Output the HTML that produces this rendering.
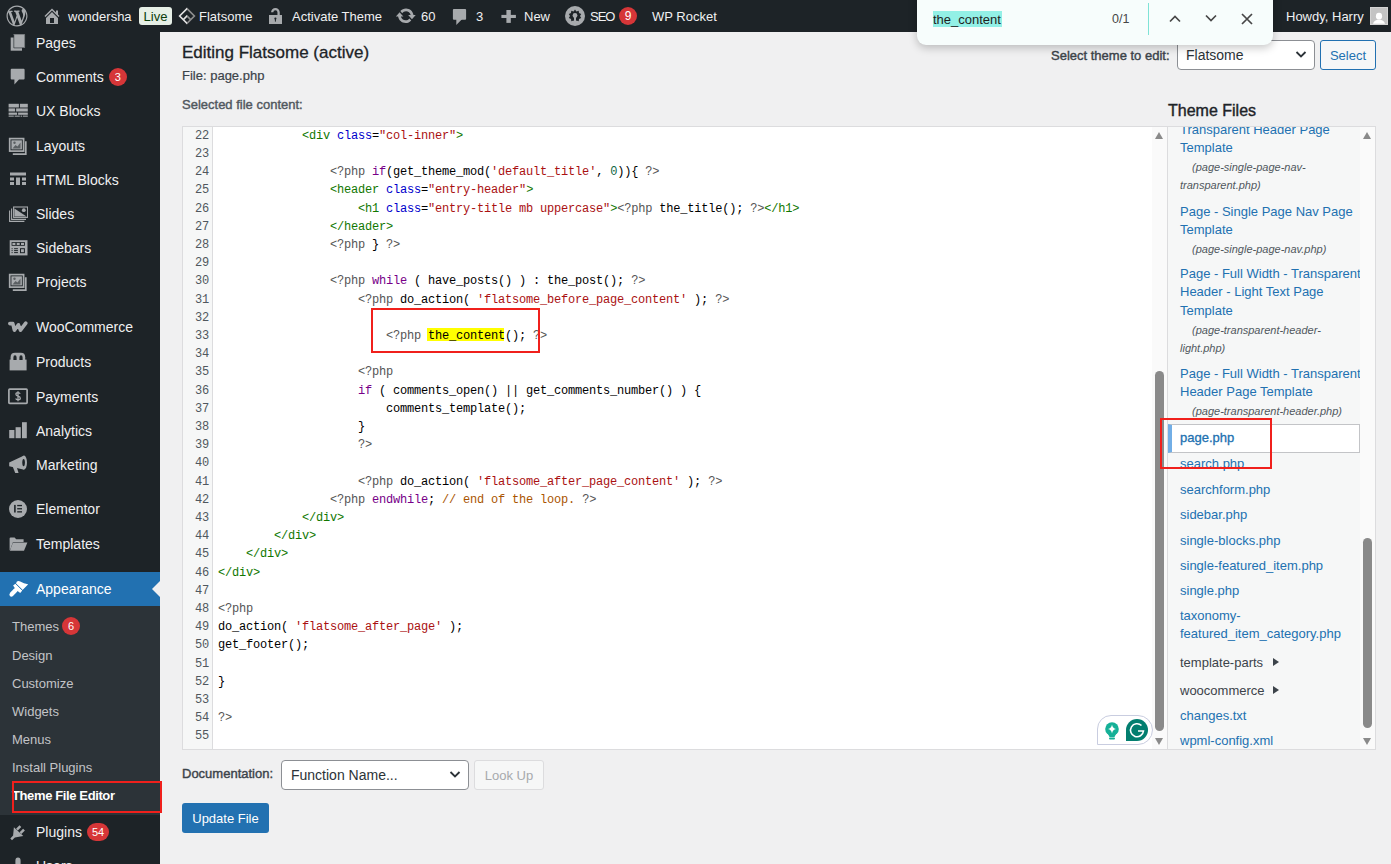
<!DOCTYPE html>
<html><head><meta charset="utf-8">
<style>
*{margin:0;padding:0;box-sizing:border-box}
html,body{width:1391px;height:864px;overflow:hidden;background:#f0f0f1;font-family:"Liberation Sans",sans-serif;color:#3c434a;font-size:13px}
.a{position:absolute;white-space:nowrap}
#bar{position:absolute;left:0;top:0;width:1391px;height:32px;background:#1d2327;color:#f0f0f1;font-size:13px}
#bar .t{position:absolute;top:0;line-height:32px;white-space:nowrap}
#side{position:absolute;left:0;top:32px;width:160px;height:832px;background:#1d2327}
.mi{position:absolute;left:0;width:160px;height:34px;color:#f0f0f1;font-size:14px}
.mi .lb{position:absolute;left:36px;top:0;line-height:34px;white-space:nowrap}
.mi svg{position:absolute;left:8px;top:7px}
.badge{display:inline-block;background:#d63638;color:#fff;border-radius:9px;height:18px;min-width:18px;padding:0 5px;font-size:11px;line-height:18px;text-align:center;vertical-align:top;margin-left:5px;margin-top:8px}
#sub{position:absolute;left:0;top:606px;width:160px;height:209px;background:#2c3338}
.si{position:absolute;left:12px;font-size:13px;color:#c3c4c7;white-space:nowrap;line-height:20px}
.semi{-webkit-text-stroke:0.4px currentColor}
#ed{position:absolute;left:182px;top:126px;width:986px;height:624px;background:#fff;border:1px solid #dcdcde;overflow:hidden}
#gut{position:absolute;left:0;top:0;width:30px;height:100%;background:#f6f7f7;border-right:1px solid #dcdcde}
.ln{position:absolute;left:0;width:26px;text-align:right;font-family:"Liberation Mono",monospace;font-size:12px;letter-spacing:-0.2px;color:#50575e;height:18.2px;line-height:18.2px}
.cl{position:absolute;left:35px;font-family:"Liberation Mono",monospace;font-size:12px;letter-spacing:-0.2px;color:#000;height:18.2px;line-height:18.2px;white-space:pre}
.hl{}
.tg{color:#117700}.at{color:#0000cc}.st{color:#aa1111}.kw{color:#770088}.cm{color:#aa5500}.mt{color:#555}.nm{color:#116644}
#tf{position:absolute;left:1167px;top:126px;width:209px;height:624px;background:#f6f7f7;border:1px solid #dcdcde;overflow:hidden}
.lk{position:absolute;left:12px;color:#2271b1;font-size:13px;line-height:18.2px;white-space:nowrap}
.fn{position:absolute;left:24px;color:#50575e;font-size:11px;font-style:italic;line-height:18px;white-space:nowrap}
.redbox{position:absolute;border:2px solid #f0201c}
</style></head><body>

<!-- ADMIN BAR -->
<div id="bar">
<svg class="a" style="left:6px;top:5px" width="22" height="22" viewBox="-0.5 -0.5 21 21"><path fill="#a7aaad" d="M20 10c0-5.51-4.49-10-10-10C4.48 0 0 4.49 0 10c0 5.52 4.48 10 10 10 5.51 0 10-4.48 10-10zM7.78 15.37L4.37 6.22c.55-.02 1.17-.08 1.17-.08.5-.06.44-1.13-.06-1.11 0 0-1.45.11-2.370.11-.18 0-.37 0-.58-.01C4.12 2.690 6.87 1.110 10 1.110c2.330 0 4.450.87 6.050 2.340-.68-.11-1.650.39-1.650 1.580 0 .74.45 1.360.9 2.100.35.61.55 1.360.55 2.460 0 1.490-1.400 5-1.400 5l-3.030-8.370c.54-.02.82-.17.82-.17.5-.05.44-1.250-.06-1.220 0 0-1.440.12-2.380.12-.87 0-2.330-.12-2.330-.12-.5-.03-.56 1.200-.06 1.220l.92.08 1.260 3.410zM17.410 10c.24-.64.74-1.870.43-4.250.7 1.290 1.050 2.710 1.050 4.250 0 3.290-1.730 6.240-4.400 7.780.97-2.590 1.940-5.200 2.920-7.780zM6.100 18.090C3.120 16.650 1.110 13.530 1.110 10c0-1.300.23-2.480.72-3.590C3.250 10.300 4.670 14.200 6.100 18.090zm4.030-6.630l2.580 6.980c-.86.29-1.760.45-2.710.45-.79 0-1.570-.11-2.290-.33.81-2.380 1.620-4.740 2.420-7.100z"/></svg>
<svg class="a" style="left:42px;top:6px" width="20" height="20" viewBox="0 0 20 20"><path fill="#a7aaad" d="M16 8.5l1.53 1.53-1.06 1.06L10 4.62l-6.47 6.47-1.06-1.06L10 2.5l4 4v-2h2v4zm-6-2.46l6 5.990V18H4v-5.970zM12 17v-5H8v5h4z"/></svg>
<div class="t" style="left:68px;top:1px">wondersha</div>
<div class="a" style="left:139px;top:7px;width:33px;height:18px;background:#e6efe6;border-radius:3px;color:#0b3d0b;font-size:13px;line-height:19.5px;text-align:center">Live</div>
<svg class="a" style="left:178px;top:7px" width="18" height="18" viewBox="-0.5 -0.5 19 19"><defs><linearGradient id="fg" x1="0" y1="0" x2="1" y2="0"><stop offset="0.5" stop-color="#e2e2e2"/><stop offset="0.5" stop-color="#8e8e8e"/></linearGradient></defs><g fill="none" stroke="url(#fg)" stroke-width="1.7"><path d="M9 1.2 L16.8 9 L9 16.8 L1.2 9 Z"/><path d="M5.4 12.6 L9 9 L12.6 12.6"/></g></svg>
<div class="t" style="left:199px;top:1px">Flatsome</div>
<svg class="a" style="left:268px;top:7px" width="15" height="18" viewBox="0 0 15 18"><path d="M4.2 5.3 A3.2 3.2 0 0 1 10.6 5.3 V8.5" fill="none" stroke="#a7aaad" stroke-width="2.3"/><rect x="1" y="8" width="13" height="9" fill="#a7aaad"/><circle cx="7.4" cy="11.6" r="1.1" fill="#1d2327"/><rect x="6.9" y="11.6" width="1" height="3" fill="#1d2327"/></svg>
<div class="t" style="left:292px;top:1px">Activate Theme</div>
<svg class="a" style="left:394.5px;top:5.2px" width="21.6" height="21.6" viewBox="0 0 20 20"><path fill="#a7aaad" d="M10.2 3.28c3.53 0 6.43 2.61 6.92 6h2.08l-3.5 4-3.5-4h2.320c-.45-1.970-2.210-3.450-4.320-3.450-1.450 0-2.730.71-3.540 1.780L4.950 5.660C6.230 4.200 8.110 3.280 10.200 3.280zm-.4 13.440c-3.520 0-6.430-2.610-6.920-6H.8l3.5-4c1.170 1.330 2.330 2.670 3.500 4H5.480c.45 1.970 2.210 3.450 4.320 3.450 1.450 0 2.730-.71 3.540-1.780l1.710 1.950c-1.280 1.460-3.150 2.380-5.250 2.380z"/></svg>
<div class="t" style="left:421px;top:1px">60</div>
<svg class="a" style="left:452px;top:9px" width="15" height="17" viewBox="0 0 15 17"><rect x="0.9" y="0" width="13.2" height="10.8" rx="1" fill="#a7aaad"/><path d="M4.3 10 V16 L10.2 10 Z" fill="#a7aaad"/></svg>
<div class="t" style="left:476px;top:1px">3</div>
<svg class="a" style="left:501px;top:9px" width="15" height="15" viewBox="0 0 15 15"><rect x="5.4" y="1" width="4.4" height="12.9" fill="#a7aaad"/><rect x="0.4" y="5.9" width="14.5" height="3.1" fill="#a7aaad"/></svg>
<div class="t" style="left:524px;top:1px">New</div>
<svg class="a" style="left:564px;top:5px" width="22" height="22" viewBox="0 0 22 22"><circle cx="11" cy="11" r="10" fill="#a7aaad"/><path d="M11 4.5 L12.4 6.4 L14.7 5.7 L15 8 L17.2 9 L16 11 L17.2 13 L15 14 L14.7 16.3 L12.4 15.6 L11 17.5 L9.6 15.6 L7.3 16.3 L7 14 L4.8 13 L6 11 L4.8 9 L7 8 L7.3 5.7 L9.6 6.4 Z" fill="#1d2327"/><circle cx="11" cy="10.5" r="2.4" fill="#a7aaad"/><rect x="10" y="10.5" width="2" height="8" fill="#a7aaad"/></svg>
<div class="t" style="left:590px;top:1px;letter-spacing:-1px">SEO</div>
<div class="a" style="left:619px;top:7px;width:18px;height:18px;border-radius:9px;background:#d63638;color:#fff;font-size:12px;line-height:18px;text-align:center">9</div>
<div class="t" style="left:652px;top:1px">WP Rocket</div>
<div class="t" style="left:1286px;top:1px">Howdy, Harry</div>
<svg class="a" style="left:1370px;top:7px" width="18" height="18" viewBox="0 0 18 18"><rect x="0.5" y="0.5" width="17" height="17" fill="#c4c4c4" stroke="#d4d4d4" stroke-width="1"/><ellipse cx="9" cy="9.2" rx="3.1" ry="3.4" fill="#fff"/><path d="M3 16.7 Q4 12.8 9 12.8 Q14 12.8 15 16.7 Z" fill="#fff"/></svg>
</div>

<!-- SIDEBAR -->
<div id="side">
<!--SIDE-->
<div class="mi" style="top:-5.6px"><svg width="20" height="20" viewBox="0 0 20 20"><path d="M2.7 4.5h11.3v13.2H2.7z" fill="#a7aaad"/><path d="M5.8 1.5h10.8v13.4H5.8z" fill="#a7aaad" stroke="#1d2327" stroke-width="0.6"/><path d="M5.5 1.5h11.1v13.4" fill="none" stroke="#a7aaad" stroke-width="0.6"/></svg><div class="lb">Pages</div></div>
<div class="mi" style="top:28.4px"><svg width="20" height="20" viewBox="0 0 20 20"><path d="M3.7 1.8h11.9q1 0 1 1v8.8q0 1-1 1H11L6.4 17.6v-5H3.7q-1 0-1-1V2.8q0-1 1-1z" fill="#a7aaad"/></svg><div class="lb">Comments<span class="badge">3</span></div></div>
<div class="mi" style="top:62.4px"><svg width="20" height="20" viewBox="0 0 20 20"><g fill="#a7aaad"><rect x="0.6" y="2.8" width="10.3" height="3.7"/><rect x="11.9" y="2.8" width="7.9" height="3.7"/><rect x="0.6" y="7.4" width="6.5" height="3.1"/><rect x="8.1" y="7.4" width="11.7" height="3.1"/><rect x="0.6" y="11.6" width="8.5" height="2.2"/><rect x="10.1" y="11.6" width="9.7" height="2.2"/><rect x="0.6" y="14.6" width="5.2" height="1.1"/><rect x="6.6" y="14.6" width="5.2" height="1.1"/><rect x="12.6" y="14.6" width="1.4" height="1.1"/><rect x="14.8" y="14.6" width="5" height="1.1"/></g></svg><div class="lb">UX Blocks</div></div>
<div class="mi" style="top:96.6px"><svg width="20" height="20" viewBox="0 0 20 20"><path d="M17.8 5.2v13H4.8" fill="none" stroke="#a7aaad" stroke-width="1.7"/><rect x="1.7" y="2.6" width="13.9" height="12.5" fill="none" stroke="#a7aaad" stroke-width="1.7"/><rect x="3.4" y="4.3" width="10.5" height="9.1" fill="#a7aaad"/><path d="M4.5 12.5l3-3.5 2 1.5 3-4v6z" fill="#1d2327" opacity="0.55"/><circle cx="6.5" cy="6.8" r="1.2" fill="#1d2327" opacity="0.55"/></svg><div class="lb">Layouts</div></div>
<div class="mi" style="top:130.8px"><svg width="20" height="20" viewBox="0 0 20 20"><g fill="#a7aaad"><rect x="2" y="2.5" width="16" height="3"/><rect x="2" y="7.5" width="4" height="3"/><rect x="8" y="7.5" width="4" height="7.5"/><rect x="14" y="7.5" width="4" height="3"/><rect x="2" y="12" width="4" height="3"/><rect x="14" y="12" width="4" height="3"/></g></svg><div class="lb">HTML Blocks</div></div>
<div class="mi" style="top:164.8px"><svg width="20" height="20" viewBox="0 0 20 20"><g fill="none" stroke="#a7aaad" stroke-width="1.1"><path d="M1.6 6.4V17.4H16.4"/><path d="M3.6 4.6V15.4H18"/><rect x="5.6" y="3" width="14" height="10.4" fill="#1d2327"/></g><path d="M6.4 4.6L18.6 12.6H6.4Z" fill="#a7aaad"/><circle cx="15.8" cy="6.2" r="1.9" fill="#a7aaad"/></svg><div class="lb">Slides</div></div>
<div class="mi" style="top:198.8px"><svg width="20" height="20" viewBox="0 0 20 20"><rect x="1.7" y="2.2" width="17.8" height="15.2" fill="#a7aaad"/><g fill="#1d2327"><rect x="3.6" y="4.1" width="13.3" height="3.7"/><rect x="3.6" y="10.2" width="1" height="1"/><rect x="3.6" y="12.1" width="1" height="1"/><rect x="3.6" y="14.1" width="1" height="1"/><rect x="6.1" y="10.2" width="3.8" height="1"/><rect x="6.1" y="12.1" width="3.8" height="1"/><rect x="6.1" y="14.1" width="3.8" height="1"/><rect x="12" y="10.2" width="4.9" height="5"/></g><g fill="#a7aaad"><rect x="4.4" y="4.9" width="3" height="2.1"/><rect x="8.7" y="4.9" width="3" height="2.1"/><rect x="13" y="4.9" width="3" height="2.1"/><rect x="13" y="11.2" width="2.9" height="3"/></g></svg><div class="lb">Sidebars</div></div>
<div class="mi" style="top:232.8px"><svg width="20" height="20" viewBox="0 0 20 20"><path d="M17.8 5.2v13H4.8" fill="none" stroke="#a7aaad" stroke-width="1.7"/><rect x="1.7" y="2.6" width="13.9" height="12.5" fill="none" stroke="#a7aaad" stroke-width="1.7"/><rect x="3.4" y="4.3" width="10.5" height="9.1" fill="#a7aaad"/><path d="M4.5 12.5l3-3.5 2 1.5 3-4v6z" fill="#1d2327" opacity="0.55"/><circle cx="6.5" cy="6.8" r="1.2" fill="#1d2327" opacity="0.55"/></svg><div class="lb">Projects</div></div>
<div class="mi" style="top:278.4px"><svg width="20" height="20" viewBox="0 0 20 20"><path d="M1.8 6.6H4.8L6.4 13.2L10.4 7.8L12.5 13.2L17.8 6.2" fill="none" stroke="#a7aaad" stroke-width="3.6" stroke-linejoin="round" stroke-linecap="round"/></svg><div class="lb">WooCommerce</div></div>
<div class="mi" style="top:313.4px"><svg width="20" height="20" viewBox="0 0 20 20"><rect x="1.6" y="7.6" width="17" height="10.8" fill="#a7aaad"/><path d="M2.6 8V5.2Q2.6 0.8 7 0.8H12.8Q17.2 0.8 17.2 5.2V8z" fill="#a7aaad"/><path d="M5.4 8V5.6Q5.4 3.2 7 3.2Q8.6 3.2 8.6 5.6V8zM11.4 8V5.6Q11.4 3.2 13 3.2Q14.6 3.2 14.6 5.6V8z" fill="#1d2327"/></svg><div class="lb">Products</div></div>
<div class="mi" style="top:347.8px"><svg width="20" height="20" viewBox="0 0 20 20"><rect x="0.9" y="2.2" width="18.2" height="14.2" rx="0.8" fill="none" stroke="#a7aaad" stroke-width="1.7"/><path d="M12.2 6.8Q11.6 5.6 10 5.6Q7.9 5.6 7.9 7.2Q7.9 8.6 10 9.2Q12.3 9.8 12.3 11.3Q12.3 12.9 10 12.9Q8.2 12.9 7.7 11.6M10 4.3V14.2" fill="none" stroke="#a7aaad" stroke-width="1.3"/></svg><div class="lb">Payments</div></div>
<div class="mi" style="top:381.8px"><svg width="20" height="20" viewBox="0 0 20 20"><g fill="#a7aaad"><rect x="1.2" y="9" width="5.2" height="8.2"/><rect x="7.6" y="6.2" width="5.2" height="11"/><rect x="14" y="1.2" width="4.8" height="16"/></g></svg><div class="lb">Analytics</div></div>
<div class="mi" style="top:415.8px"><svg width="20" height="20" viewBox="0 0 20 20"><path d="M1.2 7.6L15.5 0.8L16.2 14.8L1.2 11.2Z" fill="#a7aaad"/><path d="M4.6 11.2L8.8 12.2L10.6 17.9H7.2Z" fill="#a7aaad"/><ellipse cx="16" cy="7.6" rx="3" ry="7" fill="#a7aaad"/><ellipse cx="15.6" cy="7.6" rx="1.3" ry="3.6" fill="#1d2327"/></svg><div class="lb">Marketing</div></div>
<div class="mi" style="top:460.4px"><svg width="20" height="20" viewBox="0 0 20 20"><circle cx="10" cy="10" r="9" fill="#a7aaad"/><g fill="#1d2327"><rect x="6.1" y="5.9" width="1.6" height="7.6"/><rect x="9.2" y="5.9" width="4.8" height="1.3"/><rect x="9.2" y="9.1" width="4.8" height="1.3"/><rect x="9.2" y="12.2" width="4.8" height="1.3"/></g></svg><div class="lb">Elementor</div></div>
<div class="mi" style="top:494.9px"><svg width="20" height="20" viewBox="0 0 20 20"><path d="M1.6 4.6Q1.6 3.4 2.8 3.4H6.6L8.2 5.2H15.6V8H5L2 16.2H1.6Z" fill="#a7aaad"/><path d="M4.9 8.6H19.4L16 16.8H1.9Z" fill="#a7aaad"/></svg><div class="lb">Templates</div></div>
<div class="mi" style="top:783.0px"><svg width="20" height="20" viewBox="0 0 20 20"><path d="M5.9 5.2L15.3 14L6.9 15.4L4 18.2L2.3 16.5L5.1 13.6Z" fill="#a7aaad"/><path d="M8.9 7.6L12.4 4.1M12.5 11.2L16 7.7" stroke="#a7aaad" stroke-width="2.5"/></svg><div class="lb">Plugins<span class="badge">54</span></div></div>
<div class="mi" style="top:817.0px"><svg width="20" height="20" viewBox="0 0 20 20"><path d="M10 1.5q2.6 0 2.6 3.2v3q0 3-2.6 3t-2.6-3v-3q0-3.2 2.6-3.2z" fill="#a7aaad"/><path d="M3 18q0-5 4-6h6q4 1 4 6z" fill="#a7aaad"/></svg><div class="lb">Users</div></div>
<div class="mi" style="top:540px;background:#2271b1"><svg width="20" height="20" viewBox="0 0 20 20"><path d="M8 4.4 L8.9 2.5 Q10.6 1.7 12.2 2.6 Q16 5 20.3 5.3 L14.6 11 Z" fill="#fff"/><path d="M5.1 6.5 L7.4 4.8 L14.3 11.6 L12.2 13.9 L9.6 12 L8.6 12.9 L5.9 10.2 L6.8 9.1 Z" fill="#fff"/><path d="M6.2 9.6 L9.3 12.6 L5.2 16.8 Q3.4 18.5 1.9 17.1 Q0.6 15.6 2.3 13.6 Z" fill="#fff"/><path d="M7.6 4.6 L14.6 11.4" stroke="#2271b1" stroke-width="0.7"/></svg><div class="lb" style="color:#fff">Appearance</div><div class="a" style="left:152px;top:9px;width:0;height:0;border-top:8px solid transparent;border-bottom:8px solid transparent;border-right:8px solid #f0f0f1"></div></div>
<div id="sub" style="top:574px"></div>
<div class="si" style="top:585.4px;">Themes<span class="badge" style="margin-top:0;vertical-align:top;margin-left:3px">6</span></div>
<div class="si" style="top:613.5px;">Design</div>
<div class="si" style="top:641.5px;">Customize</div>
<div class="si" style="top:669.6px;">Widgets</div>
<div class="si" style="top:697.7px;">Menus</div>
<div class="si" style="top:725.8px;">Install Plugins</div>
<div class="si" style="top:753.9px;color:#fff;font-weight:bold;letter-spacing:-0.38px">Theme File Editor</div>
<!--/SIDE-->
</div>

<!-- CONTENT -->
<div class="a" style="left:182px;top:43px;font-size:17px;color:#1d2327;line-height:20px;-webkit-text-stroke:0.3px #1d2327">Editing Flatsome (active)</div>
<div class="a" style="left:182px;top:68px;font-size:13px;color:#3c434a;line-height:16px;-webkit-text-stroke:0.2px #3c434a">File: page.php</div>
<div class="a semi" style="left:182px;top:97px;font-size:13px;color:#50575e;line-height:16px">Selected file content:</div>

<div id="ed">
  <div id="gut"></div>
<!--CODE-->
<div class="a" style="left:244px;top:201px;width:77px;height:13px;background:#ffff00"></div>
<div class="ln" style="top:-0.3px">22</div>
<div class="ln" style="top:17.9px">23</div>
<div class="ln" style="top:36.1px">24</div>
<div class="ln" style="top:54.3px">25</div>
<div class="ln" style="top:72.5px">26</div>
<div class="ln" style="top:90.7px">27</div>
<div class="ln" style="top:108.9px">28</div>
<div class="ln" style="top:127.1px">29</div>
<div class="ln" style="top:145.3px">30</div>
<div class="ln" style="top:163.5px">31</div>
<div class="ln" style="top:181.7px">32</div>
<div class="ln" style="top:199.9px">33</div>
<div class="ln" style="top:218.1px">34</div>
<div class="ln" style="top:236.3px">35</div>
<div class="ln" style="top:254.5px">36</div>
<div class="ln" style="top:272.7px">37</div>
<div class="ln" style="top:290.9px">38</div>
<div class="ln" style="top:309.1px">39</div>
<div class="ln" style="top:327.3px">40</div>
<div class="ln" style="top:345.5px">41</div>
<div class="ln" style="top:363.7px">42</div>
<div class="ln" style="top:381.9px">43</div>
<div class="ln" style="top:400.1px">44</div>
<div class="ln" style="top:418.3px">45</div>
<div class="ln" style="top:436.5px">46</div>
<div class="ln" style="top:454.7px">47</div>
<div class="ln" style="top:472.9px">48</div>
<div class="ln" style="top:491.1px">49</div>
<div class="ln" style="top:509.3px">50</div>
<div class="ln" style="top:527.5px">51</div>
<div class="ln" style="top:545.7px">52</div>
<div class="ln" style="top:563.9px">53</div>
<div class="ln" style="top:582.1px">54</div>
<div class="ln" style="top:600.3px">55</div>
<div class="cl" style="top:-0.3px">            <span class="tg">&lt;div</span> <span class="at">class</span>=<span class="st">"col-inner"</span><span class="tg">&gt;</span></div>
<div class="cl" style="top:36.1px">                <span class="mt">&lt;?php</span> <span class="kw">if</span>(get_theme_mod(<span class="st">'default_title'</span>, <span class="nm">0</span>)){ <span class="mt">?&gt;</span></div>
<div class="cl" style="top:54.3px">                <span class="tg">&lt;header</span> <span class="at">class</span>=<span class="st">"entry-header"</span><span class="tg">&gt;</span></div>
<div class="cl" style="top:72.5px">                    <span class="tg">&lt;h1</span> <span class="at">class</span>=<span class="st">"entry-title mb uppercase"</span><span class="tg">&gt;</span><span class="mt">&lt;?php</span> the_title(); <span class="mt">?&gt;</span><span class="tg">&lt;/h1&gt;</span></div>
<div class="cl" style="top:90.7px">                <span class="tg">&lt;/header&gt;</span></div>
<div class="cl" style="top:108.9px">                <span class="mt">&lt;?php</span> } <span class="mt">?&gt;</span></div>
<div class="cl" style="top:145.3px">                <span class="mt">&lt;?php</span> <span class="kw">while</span> ( have_posts() ) : the_post(); <span class="mt">?&gt;</span></div>
<div class="cl" style="top:163.5px">                    <span class="mt">&lt;?php</span> do_action( <span class="st">'flatsome_before_page_content'</span> ); <span class="mt">?&gt;</span></div>
<div class="cl" style="top:199.9px">                        <span class="mt">&lt;?php</span> <span class="hl">the_content</span>(); <span class="mt">?&gt;</span></div>
<div class="cl" style="top:236.3px">                    <span class="mt">&lt;?php</span></div>
<div class="cl" style="top:254.5px">                    <span class="kw">if</span> ( comments_open() || get_comments_number() ) {</div>
<div class="cl" style="top:272.7px">                        comments_template();</div>
<div class="cl" style="top:290.9px">                    }</div>
<div class="cl" style="top:309.1px">                    <span class="mt">?&gt;</span></div>
<div class="cl" style="top:345.5px">                    <span class="mt">&lt;?php</span> do_action( <span class="st">'flatsome_after_page_content'</span> ); <span class="mt">?&gt;</span></div>
<div class="cl" style="top:363.7px">                <span class="mt">&lt;?php</span> <span class="kw">endwhile</span>; <span class="cm">// end of the loop.</span> <span class="mt">?&gt;</span></div>
<div class="cl" style="top:381.9px">            <span class="tg">&lt;/div&gt;</span></div>
<div class="cl" style="top:400.1px">        <span class="tg">&lt;/div&gt;</span></div>
<div class="cl" style="top:418.3px">    <span class="tg">&lt;/div&gt;</span></div>
<div class="cl" style="top:436.5px"><span class="tg">&lt;/div&gt;</span></div>
<div class="cl" style="top:472.9px"><span class="mt">&lt;?php</span></div>
<div class="cl" style="top:491.1px">do_action( <span class="st">'flatsome_after_page'</span> );</div>
<div class="cl" style="top:509.3px">get_footer();</div>
<div class="cl" style="top:545.7px">}</div>
<div class="cl" style="top:582.1px"><span class="mt">?&gt;</span></div>
<!--/CODE-->
<div class="a" style="left:969px;top:0;width:15px;height:622px;background:#fafafa"></div>
<div class="a" style="left:972px;top:5px;width:0;height:0;border-left:4.5px solid transparent;border-right:4.5px solid transparent;border-bottom:7px solid #8a8a8a"></div>
<div class="a" style="left:972px;top:611px;width:0;height:0;border-left:4.5px solid transparent;border-right:4.5px solid transparent;border-top:7px solid #8a8a8a"></div>
<div class="a" style="left:972px;top:243.5px;width:9px;height:360px;background:#8a8a8a;border-radius:4.5px"></div>
</div>

<div id="tf">
<!--RIGHT-->
<div class="lk" style="left:12px;top:-6.4px;">Transparent Header Page</div>
<div class="lk" style="left:12px;top:11.8px;">Template</div>
<div class="fn" style="left:24px;top:31.1px;">(page-single-page-nav-</div>
<div class="fn" style="left:12px;top:49.2px;">transparent.php)</div>
<div class="lk" style="left:12px;top:76.1px;">Page - Single Page Nav Page</div>
<div class="lk" style="left:12px;top:94.3px;">Template</div>
<div class="fn" style="left:24px;top:112.5px;">(page-single-page-nav.php)</div>
<div class="lk" style="left:12px;top:138.1px;">Page - Full Width - Transparent</div>
<div class="lk" style="left:12px;top:155.8px;">Header - Light Text Page</div>
<div class="lk" style="left:12px;top:174.8px;">Template</div>
<div class="fn" style="left:24px;top:193.8px;">(page-transparent-header-</div>
<div class="fn" style="left:12px;top:212.0px;">light.php)</div>
<div class="lk" style="left:12px;top:237.9px;">Page - Full Width - Transparent</div>
<div class="lk" style="left:12px;top:255.9px;">Header Page Template</div>
<div class="fn" style="left:24px;top:275.4px;">(page-transparent-header.php)</div>
<div class="a" style="left:0px;top:296.5px;width:192px;height:29px;background:#fff;border:1px solid #c3c4c7;border-left:4px solid #72aee6"></div>
<div class="lk" style="left:12px;top:302.3px;-webkit-text-stroke:0.3px #2271b1">page.php</div>
<div class="lk" style="left:12px;top:328.1px;">search.php</div>
<div class="lk" style="left:12px;top:353.9px;">searchform.php</div>
<div class="lk" style="left:12px;top:378.5px;">sidebar.php</div>
<div class="lk" style="left:12px;top:404.7px;">single-blocks.php</div>
<div class="lk" style="left:12px;top:429.7px;">single-featured_item.php</div>
<div class="lk" style="left:12px;top:454.6px;">single.php</div>
<div class="lk" style="left:12px;top:480.3px;">taxonomy-</div>
<div class="lk" style="left:12px;top:497.5px;">featured_item_category.php</div>
<div class="lk" style="left:12px;top:526.7px;color:#3c434a">template-parts</div>
<div class="lk" style="left:12px;top:554.7px;color:#3c434a">woocommerce</div>
<div class="a" style="left:105px;top:531.4px;width:0;height:0;border-top:4px solid transparent;border-bottom:4px solid transparent;border-left:6px solid #3c434a"></div>
<div class="a" style="left:105px;top:559.4px;width:0;height:0;border-top:4px solid transparent;border-bottom:4px solid transparent;border-left:6px solid #3c434a"></div>
<div class="lk" style="left:12px;top:579.5px;">changes.txt</div>
<div class="lk" style="left:12px;top:604.6px;">wpml-config.xml</div>
<div class="a" style="left:192px;top:0;width:15px;height:622px;background:#fafafa"></div>
<div class="a" style="left:195px;top:5px;width:0;height:0;border-left:4.5px solid transparent;border-right:4.5px solid transparent;border-bottom:7px solid #8a8a8a"></div>
<div class="a" style="left:195px;top:611px;width:0;height:0;border-left:4.5px solid transparent;border-right:4.5px solid transparent;border-top:7px solid #8a8a8a"></div>
<div class="a" style="left:195px;top:411px;width:9px;height:190px;background:#8a8a8a;border-radius:4.5px"></div>
<!--/RIGHT-->
</div>

<!-- FIND BAR -->
<div class="a" style="z-index:10;left:917px;top:-10px;width:356px;height:55px;background:#f7fdfc;border-radius:0 0 9px 9px;box-shadow:0 3px 9px rgba(0,0,0,0.22)"></div>
<div class="a" style="z-index:10;left:933px;top:11px;width:69px;height:16px;background:#93f0e6"></div>
<div class="a" style="z-index:10;left:933px;top:10.5px;font-size:13px;line-height:18px;color:#1f1f1f">the_content</div>
<div class="a" style="z-index:10;left:1112px;top:10px;font-size:12.5px;line-height:18px;color:#474747">0/1</div>
<div class="a" style="z-index:10;left:1148px;top:3px;width:1px;height:32px;background:#7fe3d6"></div>
<svg class="a" style="z-index:10;left:1168px;top:13px" width="14" height="11" viewBox="0 0 14 11"><path d="M2 8.5 L7 3.5 L12 8.5" fill="none" stroke="#474747" stroke-width="1.7"/></svg>
<svg class="a" style="z-index:10;left:1204px;top:13px" width="14" height="11" viewBox="0 0 14 11"><path d="M2 2.5 L7 7.5 L12 2.5" fill="none" stroke="#474747" stroke-width="1.7"/></svg>
<svg class="a" style="z-index:10;left:1240px;top:12px" width="14" height="14" viewBox="0 0 14 14"><path d="M2 2 L12 12 M12 2 L2 12" fill="none" stroke="#474747" stroke-width="1.7"/></svg>

<!-- SELECT THEME -->
<div class="a semi" style="left:1051px;top:48px;font-size:13px;line-height:16px;color:#3c434a">Select theme to edit:</div>
<div class="a" style="left:1177px;top:40px;width:138px;height:30px;background:#fff;border:1px solid #8c8f94;border-radius:4px"></div>
<div class="a" style="left:1186px;top:46px;font-size:14px;line-height:18px;color:#2c3338">Flatsome</div>
<svg class="a" style="left:1295px;top:50px" width="12" height="9" viewBox="0 0 12 9"><path d="M1.5 2 L6 6.5 L10.5 2" fill="none" stroke="#2c3338" stroke-width="1.8"/></svg>
<div class="a" style="left:1320px;top:40px;width:56px;height:30px;background:#f6f7f7;border:1px solid #2271b1;border-radius:3px;color:#2271b1;font-size:13px;line-height:30px;text-align:center">Select</div>
<div class="a semi" style="left:1168px;top:102px;font-size:16px;line-height:18px;color:#1d2327">Theme Files</div>

<!-- BOTTOM -->
<div class="a semi" style="left:182px;top:766px;font-size:13px;line-height:16px;color:#3c434a">Documentation:</div>
<div class="a" style="left:281px;top:760px;width:188px;height:30px;background:#fff;border:1px solid #8c8f94;border-radius:4px"></div>
<div class="a" style="left:291px;top:766px;font-size:14px;line-height:18px;color:#2c3338">Function Name...</div>
<svg class="a" style="left:449px;top:770px" width="12" height="9" viewBox="0 0 12 9"><path d="M1.5 2 L6 6.5 L10.5 2" fill="none" stroke="#2c3338" stroke-width="1.8"/></svg>
<div class="a" style="left:474px;top:760px;width:70px;height:30px;background:#f6f7f7;border:1px solid #dcdcde;border-radius:3px;color:#a7aaad;font-size:13px;line-height:30px;text-align:center">Look Up</div>
<div class="a" style="left:182px;top:803px;width:87px;height:30px;background:#2271b1;border-radius:3px;color:#fff;font-size:13px;line-height:32px;text-align:center">Update File</div>

<!-- GRAMMARLY -->
<svg class="a" style="left:1096px;top:714px" width="58" height="32" viewBox="0 0 58 32"><path d="M1.5 30.5 L1.5 15 A13.5 13.5 0 0 1 15 1.5 L42 1.5 A14.5 14.5 0 0 1 42 30.5 Z" fill="#fff" stroke="#c9cde0" stroke-width="1"/><circle cx="16" cy="15" r="6.8" fill="#15b097"/><path d="M11.5 19 L20.5 19 L18.5 23 L13.5 23 Z" fill="#15b097"/><rect x="13" y="23.5" width="6" height="2" rx="1" fill="#15b097"/><path d="M16 10.5 Q16.6 14.4 20 15 Q16.6 15.6 16 19.5 Q15.4 15.6 12 15 Q15.4 14.4 16 10.5 Z" fill="#fff"/><path d="M30 27 L30 16 A11 11 0 1 1 41 27 Z" fill="#027e6f"/><path d="M45.5 11.5 A6.5 6.5 0 1 0 47.5 17 L42 17" fill="none" stroke="#fff" stroke-width="1.6"/></svg>

<!-- RED BOXES -->
<div class="redbox" style="left:371px;top:308px;width:169px;height:45px"></div>
<div class="redbox" style="left:1160px;top:418px;width:112px;height:51px"></div>
<div class="redbox" style="left:12px;top:781px;width:150px;height:32px"></div>

</body></html>
